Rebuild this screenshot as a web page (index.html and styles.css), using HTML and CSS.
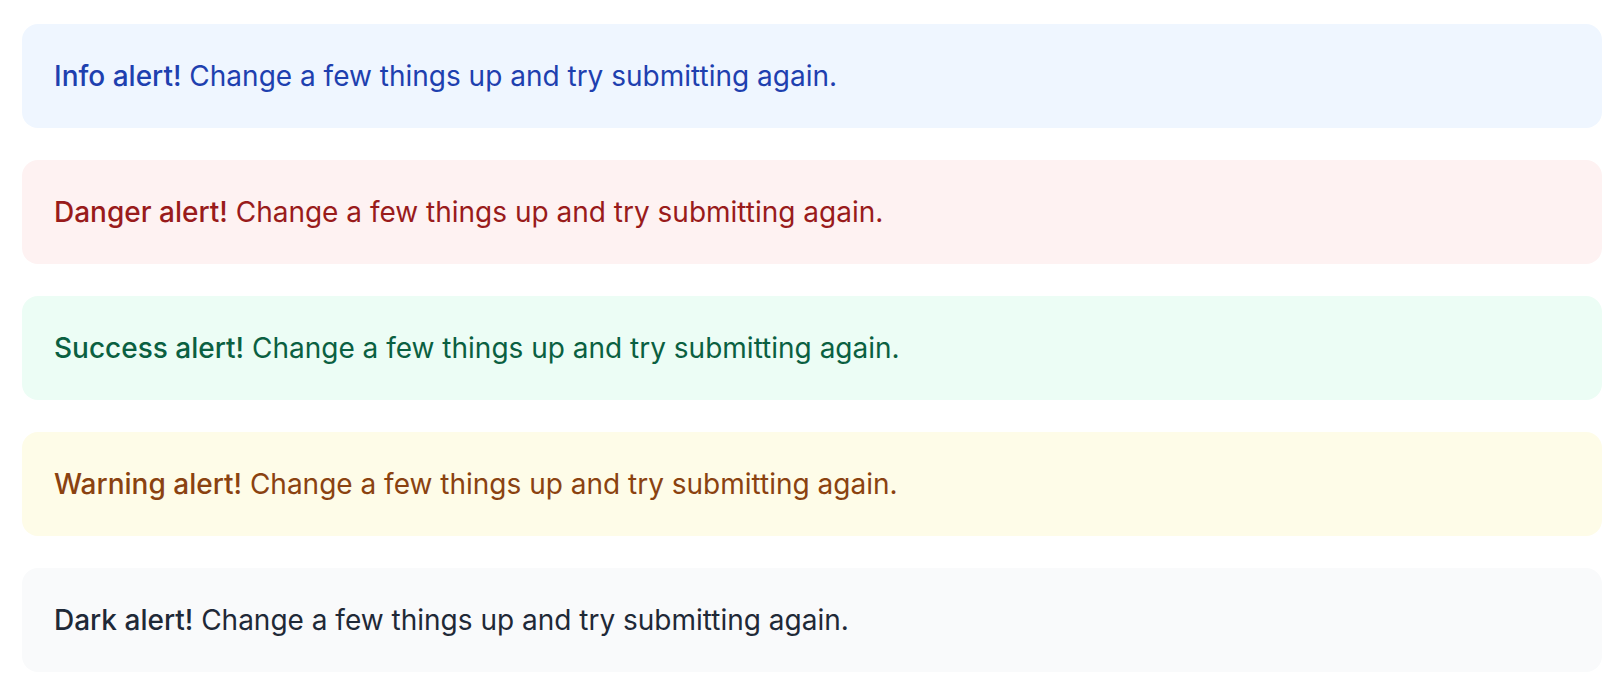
FILE: index.html
```html
<!DOCTYPE html>
<html lang="en">
<head>
  <meta charset="UTF-8">
  <meta name="viewport" content="width=device-width, initial-scale=1.0">
  <title>Alerts</title>
  <link rel="stylesheet" href="styles.css">
</head>
<body>
<div class="alerts">
  <div class="alert info" role="alert">
    <span class="title">Info alert!</span> Change a few things up and try submitting again.
  </div>
  <div class="alert danger" role="alert">
    <span class="title">Danger alert!</span> Change a few things up and try submitting again.
  </div>
  <div class="alert success" role="alert">
    <span class="title">Success alert!</span> Change a few things up and try submitting again.
  </div>
  <div class="alert warning" role="alert">
    <span class="title">Warning alert!</span> Change a few things up and try submitting again.
  </div>
  <div class="alert dark" role="alert">
    <span class="title">Dark alert!</span> Change a few things up and try submitting again.
  </div>
</div>
</body>
</html>
```

FILE: styles.css
```css
* {
  margin: 0;
  padding: 0;
  box-sizing: border-box;
}
body {
  background-color: #fff;
  font-family: Inter, "Noto Sans", sans-serif;
}
.alerts {
  display: flex;
  flex-direction: column;
  gap: 32px;
  padding: 24px 20px 0 22px;
}
.alert {
  padding: 32px;
  font-size: 28px;
  line-height: 40px;
  border-radius: 16px;
}
.alert .title {
  font-weight: 500;
}
.info {
  background-color: #eff6ff;
  color: #1e40af;
}
.danger {
  background-color: #fef2f2;
  color: #991b1b;
}
.success {
  background-color: #ecfdf5;
  color: #0a6041;
}
.warning {
  background-color: #fefce8;
  color: #8a4210;
}
.dark {
  background-color: #f9fafb;
  color: #1f2937;
}
```
